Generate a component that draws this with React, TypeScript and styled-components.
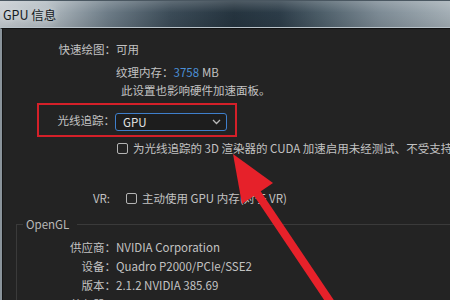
import React from 'react';
import styled, { createGlobalStyle } from 'styled-components';

const GlobalStyle = createGlobalStyle`
    html, body {
        margin: 0;
        padding: 0;
        background: #232323;
    }
`;

const Page = styled.div`
    position: relative;
    width: 450px;
    height: 300px;
    overflow: hidden;
    display: flex;
    flex-direction: column;
    background: #232323;
    font-family: "Noto Sans CJK SC", "Noto Sans", sans-serif;
    font-size: 11.5px;
    color: #c2c2c2;
`;

const TitleBar = styled.div`
    height: 26px;
    flex-shrink: 0;
    display: flex;
    align-items: center;
    padding-left: 3px;
    border-top: 1px solid #4a5761;
    border-bottom: 1px solid #b8c2c9;
    background:
        linear-gradient(180deg, rgba(255, 255, 255, 0.18) 0%, rgba(255, 255, 255, 0) 45%, rgba(0, 0, 0, 0.08) 100%),
        linear-gradient(90deg, #c6ccd1 0%, #b3bcc2 10%, #6d7c87 24%, #3b4b57 38%, #25343f 52%, #2c3c48 62%, #4f606b 72%, #7c8a94 84%, #a4afb6 100%);
`;

const Title = styled.span`
    font-family: "Noto Sans CJK SC", "Noto Sans", sans-serif;
    font-size: 12.5px;
    color: #151a1e;
    text-shadow: 0 0 6px rgba(255, 255, 255, 0.7);
`;

const Frame = styled.div`
    flex: 1;
    display: flex;
    border-left: 2px solid #8a949b;
    border-top: 1px solid #111;
`;

const Content = styled.div`
    flex: 1;
    display: flex;
    flex-direction: column;
    border-left: 1px solid #141414;
    background: #232323;
`;

const Row = styled.div<{ $h: number; $mt?: number; $label?: number }>`
    display: grid;
    grid-template-columns: ${p => p.$label ?? 113}px auto;
    align-items: center;
    height: ${p => p.$h}px;
    margin-top: ${p => p.$mt ?? 0}px;
    white-space: nowrap;
`;

const Label = styled.span<{ $pr?: number }>`
    text-align: right;
    padding-right: ${p => p.$pr ?? 0}px;
`;

const Value = styled.span<{ $pl?: number }>`
    display: flex;
    align-items: center;
    padding-left: ${p => p.$pl ?? 0}px;
`;

const Blue = styled.span`
    color: #4b8fd6;
    margin-right: 3px;
`;

const RedBox = styled.div`
    margin: 4px 0 0 34px;
    width: 200px;
    height: 34px;
    box-sizing: border-box;
    border: 2px solid #d42029;
    display: grid;
    grid-template-columns: 76px auto;
    align-items: center;
`;

const Select = styled.div`
    width: 112px;
    height: 18px;
    box-sizing: border-box;
    margin-top: 3px;
    border: 1px solid #3f7fcc;
    border-radius: 3px;
    background: #1d1d1d;
    display: flex;
    align-items: center;
    justify-content: space-between;
    padding: 0 5px 0 7px;
    color: #e4e4e4;
    font-size: 11.5px;
`;

const Check = styled.span<{ $ml?: number }>`
    width: 9px;
    height: 9px;
    margin-left: ${p => p.$ml ?? 0}px;
    margin-right: 5px;
    border: 1.5px solid #b4b4b4;
    border-radius: 2px;
    flex-shrink: 0;
`;

const Group = styled.fieldset`
    margin: 9px -20px 0 13px;
    padding: 0;
    min-width: 0;
    border: 1px solid #3a3a3a;
    border-bottom: none;
`;

const Legend = styled.legend`
    margin-left: 6px;
    padding: 0 8px 0 3px;
    line-height: 16px;
    color: #b8b8b8;
`;

const ArrowLayer = styled.svg`
    position: absolute;
    left: 0;
    top: 0;
    pointer-events: none;
`;

const ChevronIcon = () => (
    <svg width="9" height="6" viewBox="0 0 9 6">
        <path d="M1 1 L4.5 4.5 L8 1" fill="none" stroke="#b9b9b9" strokeWidth="1.3" />
    </svg>
);

export default function App() {
    return (
        <>
            <GlobalStyle />
            <Page>
                <TitleBar>
                    <Title>GPU 信息</Title>
                </TitleBar>
                <Frame>
                    <Content>
                        <Row $h={20} $mt={10}>
                            <Label>快速绘图：</Label>
                            <Value>可用</Value>
                        </Row>
                        <Row $h={18} $mt={4}>
                            <span />
                            <Value>纹理内存：<Blue>3758</Blue>MB</Value>
                        </Row>
                        <Row $h={18}>
                            <span />
                            <Value $pl={5}>此设置也影响硬件加速面板。</Value>
                        </Row>
                        <RedBox>
                            <Label>光线追踪：</Label>
                            <Select>
                                GPU
                                <ChevronIcon />
                            </Select>
                        </RedBox>
                        <Row $h={18} $mt={2}>
                            <span />
                            <Value>
                                <Check $ml={1} />
                                为光线追踪的 3D 渲染器的 CUDA 加速启用未经测试、不受支持的模式
                            </Value>
                        </Row>
                        <Row $h={18} $mt={32}>
                            <Label $pr={6}>VR:</Label>
                            <Value>
                                <Check $ml={10} />
                                主动使用 GPU 内存(对于 VR)
                            </Value>
                        </Row>
                        <Group>
                            <Legend>OpenGL</Legend>
                            <Row $h={19} $mt={5} $label={99}>
                                <Label>供应商：</Label>
                                <Value>NVIDIA Corporation</Value>
                            </Row>
                            <Row $h={19} $label={99}>
                                <Label>设备：</Label>
                                <Value>Quadro P2000/PCIe/SSE2</Value>
                            </Row>
                            <Row $h={19} $label={99}>
                                <Label>版本：</Label>
                                <Value>2.1.2 NVIDIA 385.69</Value>
                            </Row>
                            <Row $h={19} $label={99}>
                                <Label>着色器：</Label>
                                <Value>4.60 NVIDIA</Value>
                            </Row>
                        </Group>
                    </Content>
                </Frame>
                <ArrowLayer width="450" height="300" viewBox="0 0 450 300">
                    <line x1="257" y1="193" x2="333" y2="306" stroke="#e6212a" strokeWidth="8" />
                    <polygon points="233,154 242,204 273,183" fill="#e6212a" />
                </ArrowLayer>
            </Page>
        </>
    );
}
